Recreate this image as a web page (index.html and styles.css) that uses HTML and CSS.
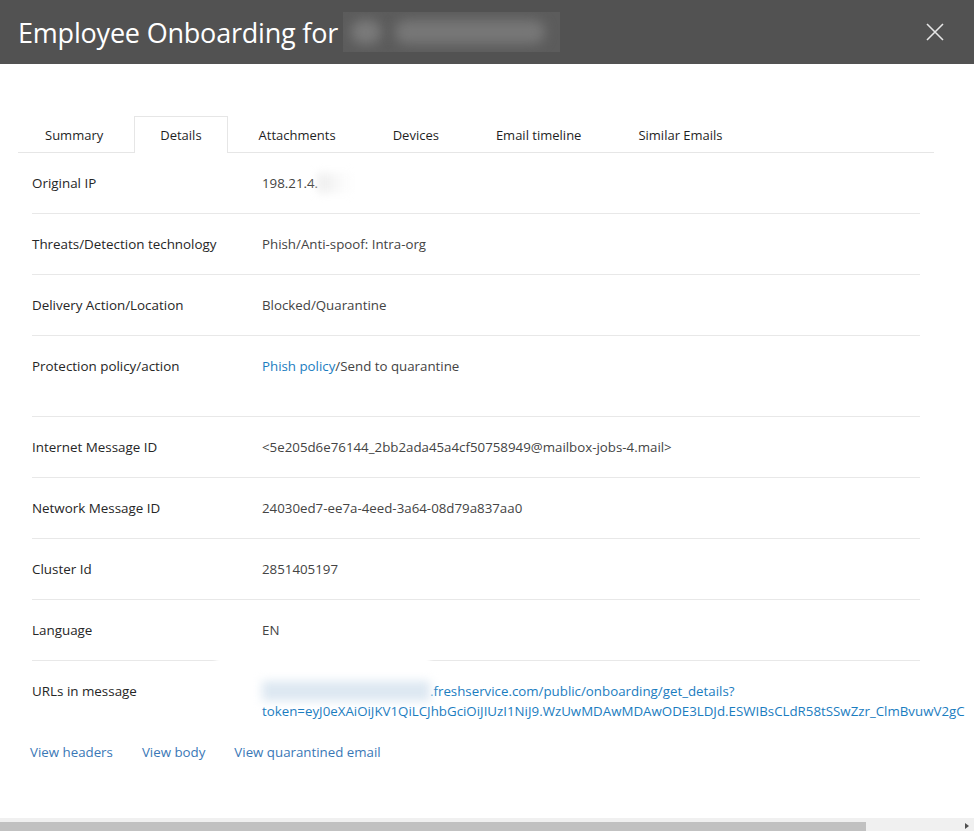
FILE: index.html
```html
<!DOCTYPE html>
<html lang="en">
<head>
    <meta charset="UTF-8">
    <meta name="viewport" content="width=device-width, initial-scale=1.0">
    <title>Employee Onboarding</title>
    <link rel="stylesheet" href="styles.css">
</head>
<body>
    <header class="panel-header">
        <h1 class="panel-title">Employee Onboarding for <span class="redacted-name"><span class="blob blob-a"></span><span class="blob blob-b"></span></span></h1>
        <button class="close-btn" aria-label="Close">
            <svg width="18" height="18" viewBox="0 0 18 18"><path d="M1 1L17 17M17 1L1 17" stroke="#e6e6e6" stroke-width="1.6" fill="none"/></svg>
        </button>
    </header>

    <main class="panel-body">
        <ul class="tabs">
            <li class="tab">Summary</li>
            <li class="tab active">Details</li>
            <li class="tab">Attachments</li>
            <li class="tab">Devices</li>
            <li class="tab">Email timeline</li>
            <li class="tab">Similar Emails</li>
        </ul>

        <div class="details">
            <div class="detail-row">
                <div class="detail-label">Original IP</div>
                <div class="detail-value">198.21.4.<span class="redacted-ip"></span></div>
            </div>
            <div class="detail-row">
                <div class="detail-label">Threats/Detection technology</div>
                <div class="detail-value">Phish/Anti-spoof: Intra-org</div>
            </div>
            <div class="detail-row">
                <div class="detail-label">Delivery Action/Location</div>
                <div class="detail-value">Blocked/Quarantine</div>
            </div>
            <div class="detail-row tall">
                <div class="detail-label">Protection policy/action</div>
                <div class="detail-value"><a class="link" href="#">Phish policy</a>/Send to quarantine</div>
            </div>
            <div class="detail-row">
                <div class="detail-label">Internet Message ID</div>
                <div class="detail-value">&lt;5e205d6e76144_2bb2ada45a4cf50758949@mailbox-jobs-4.mail&gt;</div>
            </div>
            <div class="detail-row">
                <div class="detail-label">Network Message ID</div>
                <div class="detail-value">24030ed7-ee7a-4eed-3a64-08d79a837aa0</div>
            </div>
            <div class="detail-row">
                <div class="detail-label">Cluster Id</div>
                <div class="detail-value">2851405197</div>
            </div>
            <div class="detail-row">
                <div class="detail-label">Language</div>
                <div class="detail-value">EN</div>
            </div>
            <div class="detail-row last">
                <span class="redact-patch"></span>
                <div class="detail-label">URLs in message</div>
                <div class="detail-value url-value">
                    <a class="link" href="#"><span class="redacted-url"></span>.freshservice.com/public/onboarding/get_details?<br>token=eyJ0eXAiOiJKV1QiLCJhbGciOiJIUzI1NiJ9.WzUwMDAwMDAwODE3LDJd.ESWIBsCLdR58tSSwZzr_ClmBvuwV2gC</a>
                </div>
            </div>
        </div>

        <div class="actions">
            <a class="action-link" href="#">View headers</a>
            <a class="action-link" href="#">View body</a>
            <a class="action-link" href="#">View quarantined email</a>
        </div>
    </main>

    <div class="hscroll">
        <div class="hscroll-thumb"></div>
        <span class="hscroll-arrow"></span>
    </div>
</body>
</html>
```

FILE: styles.css
```css
body {
    margin: 0;
    font-family: 'Open Sans', 'Noto Sans', sans-serif;
    background: #fff;
    color: #262626;
    overflow: hidden;
    height: 831px;
}
.panel-header {
    height: 64px;
    background: #525252;
    display: flex;
    align-items: center;
    justify-content: space-between;
    padding: 0 30px 0 18px;
}
.panel-title {
    margin: 0;
    font-size: 27px;
    font-weight: 400;
    color: #fff;
    display: flex;
    align-items: center;
    letter-spacing: -0.2px;
}
.redacted-name {
    position: relative;
    display: inline-block;
    width: 217px;
    height: 40px;
    margin-left: 5px;
    background: #5c5c5c;
    overflow: hidden;
}
.blob {
    position: absolute;
    top: 8px;
    height: 24px;
    background: #7a7a7a;
    border-radius: 12px;
    filter: blur(6px);
}
.blob-a { left: 8px; width: 30px; }
.blob-b { left: 52px; width: 150px; background: #777; }
.close-btn {
    background: none;
    border: none;
    padding: 0;
    cursor: pointer;
    display: flex;
}
.panel-body {
    padding-top: 52px;
}
.tabs {
    list-style: none;
    margin: 0 0 0 18px;
    padding: 0 0 0 1px;
    width: 915px;
    display: flex;
    gap: 5px;
    border-bottom: 1px solid #e6e6e6;
}
.tab {
    height: 35px;
    line-height: 36px;
    padding: 0 25px;
    font-size: 13px;
    color: #1f1f1f;
    margin-bottom: -1px;
    border: 1px solid transparent;
    border-bottom: none;
    cursor: pointer;
}
.tab.active {
    border-color: #e6e6e6;
    background: #fff;
    height: 36px;
}
.details {
    margin-left: 32px;
    width: 888px;
}
.detail-row {
    position: relative;
    display: grid;
    grid-template-columns: 230px 1fr;
    padding: 20px 0;
    line-height: 20px;
    border-bottom: 1px solid #e8e8e8;
}
.detail-row.tall {
    padding-bottom: 40px;
}
.detail-row.last {
    border-bottom: none;
    padding-bottom: 0;
}
.detail-label {
    font-size: 13.4px;
    color: #262626;
}
.detail-value {
    font-size: 13.3px;
    color: #444;
    white-space: nowrap;
}
.link {
    color: #1b7dbf;
    text-decoration: none;
}
.redacted-ip {
    display: inline-block;
    width: 36px;
    height: 20px;
    vertical-align: top;
    background: linear-gradient(90deg, #ececec, #fafafa 60%, #fff);
    filter: blur(4px);
}
.redact-patch {
    position: absolute;
    left: 184px;
    top: -6px;
    width: 214px;
    height: 44px;
    background: #fff;
    filter: blur(2px);
}
.redacted-url {
    display: inline-block;
    width: 168px;
    height: 20px;
    vertical-align: top;
    background: #dde8f2;
    filter: blur(5px);
}
.actions {
    display: flex;
    gap: 29px;
    margin: 21px 0 0 30px;
    line-height: 20px;
}
.action-link {
    font-size: 13.3px;
    color: #3a78b6;
    text-decoration: none;
}
.hscroll {
    position: fixed;
    left: 0;
    right: 0;
    bottom: 0;
    height: 13px;
    background: #f0f0f0;
}
.hscroll-thumb {
    position: absolute;
    left: 0;
    bottom: 0;
    width: 866px;
    height: 9px;
    background: #c1c1c1;
}
.hscroll-arrow {
    position: absolute;
    right: 5px;
    bottom: 2px;
    border-left: 4px solid #505050;
    border-top: 3px solid transparent;
    border-bottom: 3px solid transparent;
}
```
